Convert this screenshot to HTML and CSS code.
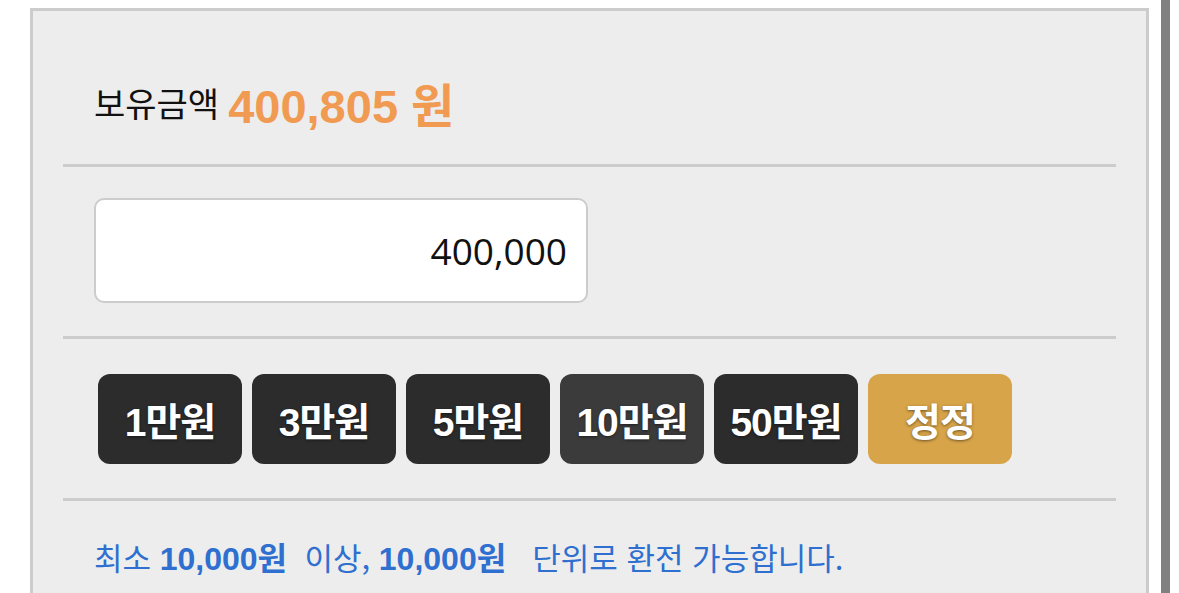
FILE: index.html
```html
<!DOCTYPE html>
<html lang="ko">
<head>
    <meta charset="UTF-8">
    <title>환전</title>
    <link rel="stylesheet" href="styles.css">
</head>
<body>
    <div class="page">
        <div class="panel">
            <div class="row balance">
                <span class="label">보유금액</span>
                <span class="amount">400,805 원</span>
            </div>
            <div class="row input-row">
                <input class="money" type="text" value="400,000">
            </div>
            <div class="row buttons">
                <button class="btn">1만원</button>
                <button class="btn">3만원</button>
                <button class="btn">5만원</button>
                <button class="btn on">10만원</button>
                <button class="btn">50만원</button>
                <button class="btn reset">정정</button>
            </div>
            <div class="row note">
                최소 <b>10,000원</b>&nbsp; 이상, <b>10,000원</b>&nbsp;&nbsp; 단위로 환전 가능합니다.
            </div>
        </div>
        <div class="bar"></div>
    </div>
</body>
</html>
```

FILE: styles.css
```css
*{
    margin: 0;
    padding: 0;
    box-sizing: border-box;
}
body{
    background: #fff;
    font-family: "Liberation Sans", "Noto Sans CJK KR", sans-serif;
    overflow: hidden;
}
.page{
    display: flex;
    height: 593px;
    padding-left: 30px;
}
.panel{
    width: 1119px;
    height: 585px;
    margin-top: 8px;
    background: #ededed;
    border: 3px solid #ccc;
    border-bottom: 0;
    padding: 0 30px;
}
.bar{
    width: 9px;
    height: 593px;
    margin-left: 12px;
    background: #808080;
}
.row{
    border-bottom: 3px solid #ccc;
    padding-left: 31px;
}
.balance{
    height: 156px;
    display: flex;
    align-items: center;
    padding-top: 30px;
}
.balance .label{
    font-family: "Noto Sans CJK KR", sans-serif;
    font-size: 34px;
    color: #111;
    margin-right: 9px;
}
.balance .amount{
    font-size: 47px;
    font-weight: bold;
    color: #f09a52;
}
.input-row{
    height: 172px;
    padding-top: 31px;
}
.money{
    display: block;
    width: 494px;
    height: 105px;
    border: 2px solid #ccc;
    border-radius: 10px;
    background: #fff;
    text-align: right;
    padding-right: 19px;
    font-family: "Open Sans", sans-serif;
    font-size: 37px;
    color: #111;
    outline: none;
}
.buttons{
    height: 162px;
    display: flex;
    align-items: center;
    gap: 10px;
    padding-left: 35px;
}
.btn{
    width: 144px;
    height: 90px;
    border: 0;
    border-radius: 12px;
    background: #2c2c2c;
    color: #fff;
    font-family: "Liberation Sans", "Noto Sans CJK KR", sans-serif;
    font-size: 39px;
    font-weight: bold;
    letter-spacing: -1px;
    text-shadow: 0 1px 3px rgba(0,0,0,0.5);
}
.btn.on{
    background: #3b3b3b;
}
.btn.reset{
    background: #d8a449;
}
.note{
    border-bottom: 0;
    padding-top: 32px;
    font-family: "Noto Sans CJK KR", sans-serif;
    font-size: 31px;
    color: #2f6fd0;
}
.note b{
    font-family: "Liberation Sans", "Noto Sans CJK KR", sans-serif;
    font-size: 32px;
}
```
